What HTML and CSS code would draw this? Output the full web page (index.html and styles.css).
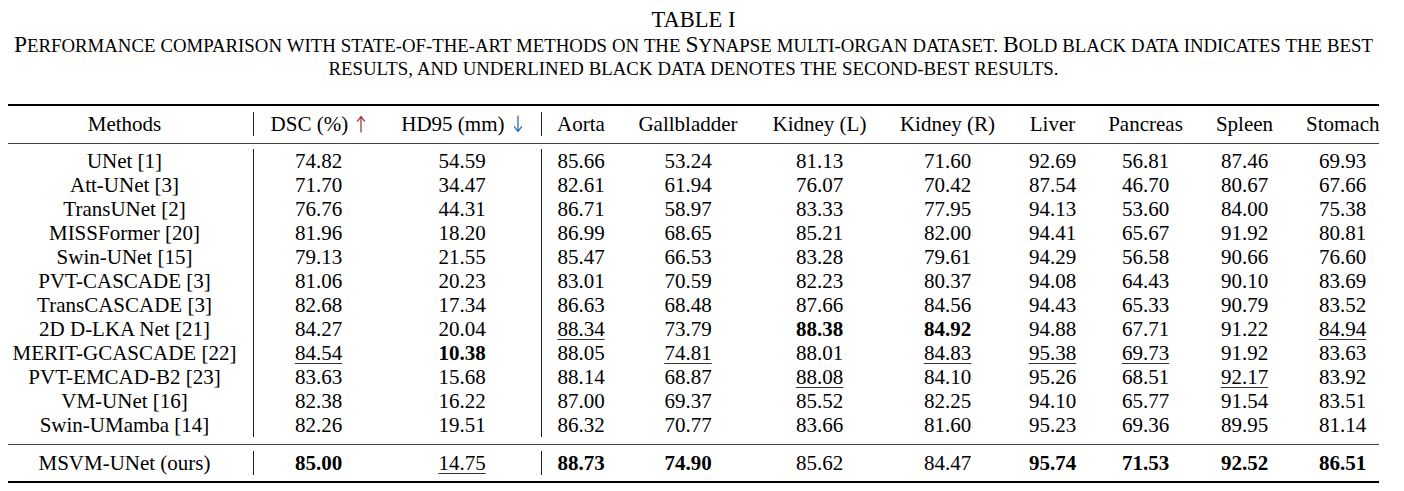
FILE: index.html
```html
<!DOCTYPE html>
<html lang="en">
<head>
<meta charset="utf-8">
<title>Table I</title>
<link rel="stylesheet" href="styles.css">
</head>
<body>
<div class="page">
  <div class="caption">
    <div class="title">TABLE I</div>
    <p class="desc">P<span class="sc">erformance comparison with state-of-the-art methods on the </span>S<span class="sc">ynapse multi-organ dataset. </span>B<span class="sc">old black data indicates the best</span><br><span class="sc">results, and underlined black data denotes the second-best results.</span></p>
  </div>
  <table class="results">
    <colgroup>
      <col class="c-method">
      <col class="c-dsc">
      <col class="c-hd">
      <col class="c-aorta">
      <col class="c-gall">
      <col class="c-kl">
      <col class="c-kr">
      <col class="c-liver">
      <col class="c-panc">
      <col class="c-spleen">
      <col class="c-stom">
    </colgroup>
    <thead>
      <tr class="rule rule-top"><td colspan="11"><div class="line"></div></td></tr>
      <tr class="row head">
        <td class="m bar">Methods</td>
        <td>DSC (%) <svg class="arrow up" viewBox="0 0 10 18" width="10" height="18"><path d="M5 17V2M1.5 6.2L5 1.5L8.5 6.2"/></svg></td>
        <td class="bar">HD95 (mm) <svg class="arrow down" viewBox="0 0 10 18" width="10" height="18"><path d="M5 1V16M1.5 11.8L5 16.5L8.5 11.8"/></svg></td>
        <td>Aorta</td>
        <td>Gallbladder</td>
        <td>Kidney (L)</td>
        <td>Kidney (R)</td>
        <td>Liver</td>
        <td>Pancreas</td>
        <td>Spleen</td>
        <td class="last">Stomach</td>
      </tr>
      <tr class="rule rule-mid"><td colspan="11"><div class="line"></div></td></tr>
    </thead>
    <tbody>
      <tr class="row"><td class="m bar">UNet [1]</td><td>74.82</td><td class="bar">54.59</td><td>85.66</td><td>53.24</td><td>81.13</td><td>71.60</td><td>92.69</td><td>56.81</td><td>87.46</td><td class="last">69.93</td></tr>
      <tr class="row"><td class="m bar">Att-UNet [3]</td><td>71.70</td><td class="bar">34.47</td><td>82.61</td><td>61.94</td><td>76.07</td><td>70.42</td><td>87.54</td><td>46.70</td><td>80.67</td><td class="last">67.66</td></tr>
      <tr class="row"><td class="m bar">TransUNet [2]</td><td>76.76</td><td class="bar">44.31</td><td>86.71</td><td>58.97</td><td>83.33</td><td>77.95</td><td>94.13</td><td>53.60</td><td>84.00</td><td class="last">75.38</td></tr>
      <tr class="row"><td class="m bar">MISSFormer [20]</td><td>81.96</td><td class="bar">18.20</td><td>86.99</td><td>68.65</td><td>85.21</td><td>82.00</td><td>94.41</td><td>65.67</td><td>91.92</td><td class="last">80.81</td></tr>
      <tr class="row"><td class="m bar">Swin-UNet [15]</td><td>79.13</td><td class="bar">21.55</td><td>85.47</td><td>66.53</td><td>83.28</td><td>79.61</td><td>94.29</td><td>56.58</td><td>90.66</td><td class="last">76.60</td></tr>
      <tr class="row"><td class="m bar">PVT-CASCADE [3]</td><td>81.06</td><td class="bar">20.23</td><td>83.01</td><td>70.59</td><td>82.23</td><td>80.37</td><td>94.08</td><td>64.43</td><td>90.10</td><td class="last">83.69</td></tr>
      <tr class="row"><td class="m bar">TransCASCADE [3]</td><td>82.68</td><td class="bar">17.34</td><td>86.63</td><td>68.48</td><td>87.66</td><td>84.56</td><td>94.43</td><td>65.33</td><td>90.79</td><td class="last">83.52</td></tr>
      <tr class="row"><td class="m bar">2D D-LKA Net [21]</td><td>84.27</td><td class="bar">20.04</td><td><span class="u">88.34</span></td><td>73.79</td><td><b>88.38</b></td><td><b>84.92</b></td><td>94.88</td><td>67.71</td><td>91.22</td><td class="last"><span class="u">84.94</span></td></tr>
      <tr class="row"><td class="m bar">MERIT-GCASCADE [22]</td><td><span class="u">84.54</span></td><td class="bar"><b>10.38</b></td><td>88.05</td><td><span class="u">74.81</span></td><td>88.01</td><td><span class="u">84.83</span></td><td><span class="u">95.38</span></td><td><span class="u">69.73</span></td><td>91.92</td><td class="last">83.63</td></tr>
      <tr class="row"><td class="m bar">PVT-EMCAD-B2 [23]</td><td>83.63</td><td class="bar">15.68</td><td>88.14</td><td>68.87</td><td><span class="u">88.08</span></td><td>84.10</td><td>95.26</td><td>68.51</td><td><span class="u">92.17</span></td><td class="last">83.92</td></tr>
      <tr class="row"><td class="m bar">VM-UNet [16]</td><td>82.38</td><td class="bar">16.22</td><td>87.00</td><td>69.37</td><td>85.52</td><td>82.25</td><td>94.10</td><td>65.77</td><td>91.54</td><td class="last">83.51</td></tr>
      <tr class="row"><td class="m bar">Swin-UMamba [14]</td><td>82.26</td><td class="bar">19.51</td><td>86.32</td><td>70.77</td><td>83.66</td><td>81.60</td><td>95.23</td><td>69.36</td><td>89.95</td><td class="last">81.14</td></tr>
      <tr class="rule rule-mid rule-sep"><td colspan="11"><div class="line"></div></td></tr>
      <tr class="row"><td class="m bar">MSVM-UNet (ours)</td><td><b>85.00</b></td><td class="bar"><span class="u">14.75</span></td><td><b>88.73</b></td><td><b>74.90</b></td><td>85.62</td><td>84.47</td><td><b>95.74</b></td><td><b>71.53</b></td><td><b>92.52</b></td><td class="last"><b>86.51</b></td></tr>
      <tr class="rule rule-bottom"><td colspan="11"><div class="line"></div></td></tr>
    </tbody>
  </table>
</div>
</body>
</html>
```

FILE: styles.css
```css
html, body {
  margin: 0;
  padding: 0;
  background: #ffffff;
}

body {
  font-family: "Liberation Serif", "Times New Roman", serif;
  color: #000000;
}

.page {
  padding: 8px 0 0 8px;
  width: 1371px;
}

.caption {
  text-align: center;
}

.title {
  font-size: 22.5px;
  line-height: 23px;
}

.desc {
  margin: 2px 0 0;
  height: 46px;
  font-size: 23.5px;
  line-height: 23px;
  white-space: nowrap;
  word-spacing: 0.4px;
}

.sc {
  text-transform: uppercase;
  font-size: 18.8px;
  line-height: 16px;
}

.results {
  margin-top: 25px;
  width: 1371px;
  table-layout: fixed;
  border-collapse: separate;
  border-spacing: 0;
  font-size: 21px;
}

.c-method { width: 246px; }
.c-dsc { width: 129px; }
.c-hd { width: 159px; }
.c-aorta { width: 78px; }
.c-gall { width: 136px; }
.c-kl { width: 127px; }
.c-kr { width: 129px; }
.c-liver { width: 81px; }
.c-panc { width: 105px; }
.c-spleen { width: 93px; }
.c-stom { width: 88px; }

.row td {
  height: 24px;
  line-height: 24px;
  padding: 0;
  text-align: center;
  white-space: nowrap;
  vertical-align: middle;
}

.row td.m {
  padding-right: 12px;
}

.row td.last {
  padding-left: 15px;
}

.row td.bar {
  border-right: 1px solid #222222;
}

.rule td {
  padding: 0;
}

.line {
  height: 1px;
  background: #444444;
}

.rule-top td {
  padding-bottom: 6px;
}

.rule-top .line,
.rule-bottom .line {
  height: 2px;
  background: #000000;
}

.rule-mid td {
  padding-top: 7px;
  padding-bottom: 5px;
}

.rule-sep td {
  padding-top: 7px;
  padding-bottom: 6px;
}

.rule-bottom td {
  padding-top: 6px;
}

b {
  font-weight: 700;
}

.u {
  text-decoration: underline;
  text-decoration-thickness: 1px;
  text-underline-offset: 3px;
  text-decoration-color: #333333;
}

.arrow {
  margin-left: 3px;
  vertical-align: -2px;
  fill: none;
  stroke-width: 1.2;
  stroke-linecap: round;
  stroke-linejoin: round;
}

.arrow.up {
  stroke: #a0282a;
}

.arrow.down {
  stroke: #1d5fa8;
}
```
